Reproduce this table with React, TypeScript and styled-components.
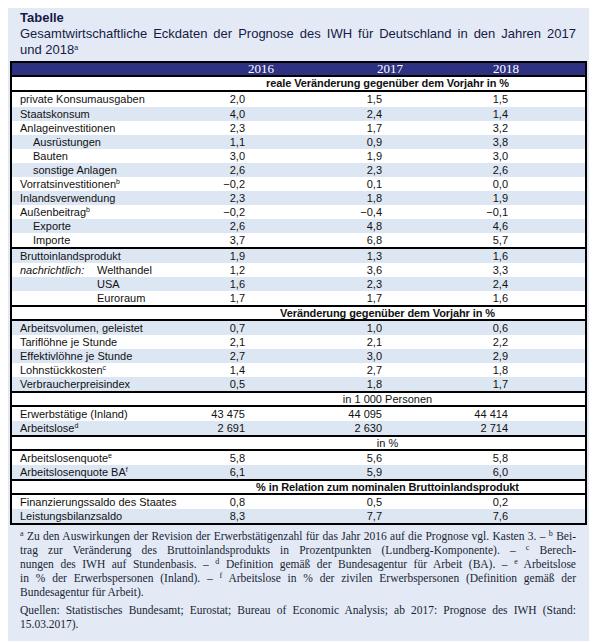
import React from 'react';
import styled, { createGlobalStyle } from 'styled-components';

const GlobalStyle = createGlobalStyle`
  body {
    margin: 8px;
    background: #ffffff;
  }
`;

const Panel = styled.div`
  width: 581px;
  box-sizing: border-box;
  background-color: #e3eaf5;
  padding: 2px 2px 10px 2px;
`;

const Title = styled.div`
  padding: 0 11px 0 10px;
  font-family: 'Liberation Sans', Arial, sans-serif;
  font-size: 13px;
  line-height: 16px;
  color: #161a45;
`;

const TitleHead = styled.div`
  font-weight: bold;
`;

const JustLine = styled.div<{ $last?: boolean }>`
  text-align: justify;
  text-align-last: ${(p) => (p.$last ? 'left' : 'justify')};
`;

const Table = styled.div`
  margin-top: 3px;
  border: 2px solid #000;
  background-color: #fff;
  font-family: 'Liberation Sans', Arial, sans-serif;
  font-size: 11px;
  color: #111;
`;

const COLS = '178px 110px 125px 1fr';

const YearRow = styled.div`
  display: grid;
  grid-template-columns: ${COLS};
  height: 12px;
  line-height: 12px;
  background-color: #2e3082;
  color: #fff;
  font-family: 'Liberation Serif', 'Times New Roman', serif;
  font-size: 13px;
`;

const YearCell = styled.div<{ $pad: number }>`
  text-align: right;
  padding-right: ${(p) => p.$pad}px;
`;

const SectionRow = styled.div<{ $bold?: boolean; $h?: number }>`
  display: grid;
  grid-template-columns: ${COLS};
  height: ${(p) => p.$h ?? 12}px;
  line-height: ${(p) => p.$h ?? 12}px;
  border-top: 2px solid #000;
  border-bottom: 2px solid #000;
  background-color: #fff;
  font-weight: ${(p) => (p.$bold ? 'bold' : 'normal')};
  letter-spacing: ${(p) => (p.$bold ? '-0.1px' : '0')};
`;

const SectionText = styled.div`
  grid-column: 2 / 5;
  text-align: center;
  white-space: nowrap;
`;

const Row = styled.div<{ $shade?: boolean; $rule?: boolean; $h?: number }>`
  display: grid;
  grid-template-columns: ${COLS};
  height: ${(p) => p.$h ?? 14}px;
  line-height: ${(p) => p.$h ?? 14}px;
  background-color: ${(p) => (p.$shade ? '#dde6f3' : '#fff')};
  border-top: ${(p) => (p.$rule ? '2px solid #000' : 'none')};
`;

const Label = styled.div<{ $indent?: number }>`
  padding-left: ${(p) => 8 + (p.$indent ?? 0) * 13}px;
  white-space: nowrap;
  display: flex;
`;

const Memo = styled.span`
  font-style: italic;
  width: 77px;
`;

const Num = styled.div<{ $pad: number }>`
  text-align: right;
  padding-right: ${(p) => p.$pad}px;
  white-space: nowrap;
`;

const Sup = styled.span`
  font-size: 7px;
  line-height: 7px;
  vertical-align: 4px;
`;

const Notes = styled.div`
  margin-top: 4px;
  padding: 0 11px 0 10px;
  font-family: 'Liberation Serif', 'Times New Roman', serif;
  font-size: 11.5px;
  line-height: 14px;
  color: #1a1f36;
`;

const Sources = styled.div`
  margin-top: 4px;
`;

const NoteSup = styled.span`
  font-size: 8px;
  vertical-align: 4px;
  line-height: 8px;
`;

type DataRow = {
  label: string;
  sup?: string;
  indent?: number;
  memo?: string;
  values: [string, string, string];
  shade?: boolean;
  rule?: boolean;
  h?: number;
};

type Block = { title: string; bold?: boolean; h?: number; rows: DataRow[] };

const NUM_PAD = [55, 43, 77];
const YEAR_PAD = [26, 22, 66];

const blocks: Block[] = [
  {
    title: 'reale Veränderung gegenüber dem Vorjahr in %',
    bold: true,
    h: 13,
    rows: [
      { label: 'private Konsumausgaben', values: ['2,0', '1,5', '1,5'], h: 15 },
      { label: 'Staatskonsum', values: ['4,0', '2,4', '1,4'], shade: true },
      { label: 'Anlageinvestitionen', values: ['2,3', '1,7', '3,2'] },
      { label: 'Ausrüstungen', indent: 1, values: ['1,1', '0,9', '3,8'], shade: true },
      { label: 'Bauten', indent: 1, values: ['3,0', '1,9', '3,0'] },
      { label: 'sonstige Anlagen', indent: 1, values: ['2,6', '2,3', '2,6'], shade: true },
      { label: 'Vorratsinvestitionen', sup: 'b', values: ['−0,2', '0,1', '0,0'] },
      { label: 'Inlandsverwendung', values: ['2,3', '1,8', '1,9'], shade: true },
      { label: 'Außenbeitrag', sup: 'b', values: ['−0,2', '−0,4', '−0,1'] },
      { label: 'Exporte', indent: 1, values: ['2,6', '4,8', '4,6'], shade: true },
      { label: 'Importe', indent: 1, values: ['3,7', '6,8', '5,7'] },
      { label: 'Bruttoinlandsprodukt', values: ['1,9', '1,3', '1,6'], shade: true, rule: true },
      { label: 'Welthandel', memo: 'nachrichtlich:', values: ['1,2', '3,6', '3,3'] },
      { label: 'USA', memo: '', values: ['1,6', '2,3', '2,4'], shade: true },
      { label: 'Euroraum', memo: '', values: ['1,7', '1,7', '1,6'] },
    ],
  },
  {
    title: 'Veränderung gegenüber dem Vorjahr in %',
    bold: true,
    rows: [
      { label: 'Arbeitsvolumen, geleistet', values: ['0,7', '1,0', '0,6'], shade: true },
      { label: 'Tariflöhne je Stunde', values: ['2,1', '2,1', '2,2'] },
      { label: 'Effektivlöhne je Stunde', values: ['2,7', '3,0', '2,9'], shade: true },
      { label: 'Lohnstückkosten', sup: 'c', values: ['1,4', '2,7', '1,8'] },
      { label: 'Verbraucherpreisindex', values: ['0,5', '1,8', '1,7'], shade: true },
    ],
  },
  {
    title: 'in 1 000 Personen',
    rows: [
      { label: 'Erwerbstätige (Inland)', values: ['43 475', '44 095', '44 414'] },
      { label: 'Arbeitslose', sup: 'd', values: ['2 691', '2 630', '2 714'], shade: true },
    ],
  },
  {
    title: 'in %',
    rows: [
      { label: 'Arbeitslosenquote', sup: 'e', values: ['5,8', '5,6', '5,8'] },
      { label: 'Arbeitslosenquote BA', sup: 'f', values: ['6,1', '5,9', '6,0'], shade: true },
    ],
  },
  {
    title: '% in Relation zum nominalen Bruttoinlandsprodukt',
    bold: true,
    rows: [
      { label: 'Finanzierungssaldo des Staates', values: ['0,8', '0,5', '0,2'] },
      { label: 'Leistungsbilanzsaldo', values: ['8,3', '7,7', '7,6'], shade: true },
    ],
  },
];

const App: React.FC = () => {
  return (
    <>
      <GlobalStyle />
      <Panel>
        <Title>
          <TitleHead>Tabelle</TitleHead>
          <JustLine>
            Gesamtwirtschaftliche Eckdaten der Prognose des IWH für Deutschland in den Jahren 2017
          </JustLine>
          <JustLine $last>
            und 2018<Sup>a</Sup>
          </JustLine>
        </Title>

        <Table>
          <YearRow>
            <div />
            {['2016', '2017', '2018'].map((y, i) => (
              <YearCell key={y} $pad={YEAR_PAD[i]}>
                {y}
              </YearCell>
            ))}
          </YearRow>
          {blocks.map((b) => (
            <React.Fragment key={b.title}>
              <SectionRow $bold={b.bold} $h={b.h}>
                <SectionText>{b.title}</SectionText>
              </SectionRow>
              {b.rows.map((r) => (
                <Row key={r.label} $shade={r.shade} $rule={r.rule} $h={r.h}>
                  <Label $indent={r.indent}>
                    {r.memo !== undefined && <Memo>{r.memo}</Memo>}
                    <span>
                      {r.label}
                      {r.sup && <Sup>{r.sup}</Sup>}
                    </span>
                  </Label>
                  {r.values.map((v, i) => (
                    <Num key={i} $pad={NUM_PAD[i]}>
                      {v}
                    </Num>
                  ))}
                </Row>
              ))}
            </React.Fragment>
          ))}
        </Table>

        <Notes>
          <JustLine>
            <NoteSup>a</NoteSup> Zu den Auswirkungen der Revision der Erwerbstätigenzahl für das Jahr 2016 auf die Prognose vgl. Kasten 3. – <NoteSup>b</NoteSup> Bei-
          </JustLine>
          <JustLine>
            trag zur Veränderung des Bruttoinlandsprodukts in Prozentpunkten (Lundberg-Komponente). – <NoteSup>c</NoteSup> Berech-
          </JustLine>
          <JustLine>
            nungen des IWH auf Stundenbasis. – <NoteSup>d</NoteSup> Definition gemäß der Bundesagentur für Arbeit (BA). – <NoteSup>e</NoteSup> Arbeitslose
          </JustLine>
          <JustLine>
            in % der Erwerbspersonen (Inland). – <NoteSup>f</NoteSup> Arbeitslose in % der zivilen Erwerbspersonen (Definition gemäß der
          </JustLine>
          <JustLine $last>Bundesagentur für Arbeit).</JustLine>
          <Sources>
            <JustLine>
              Quellen: Statistisches Bundesamt; Eurostat; Bureau of Economic Analysis; ab 2017: Prognose des IWH (Stand:
            </JustLine>
            <JustLine $last>15.03.2017).</JustLine>
          </Sources>
        </Notes>
      </Panel>
    </>
  );
};

export default App;
